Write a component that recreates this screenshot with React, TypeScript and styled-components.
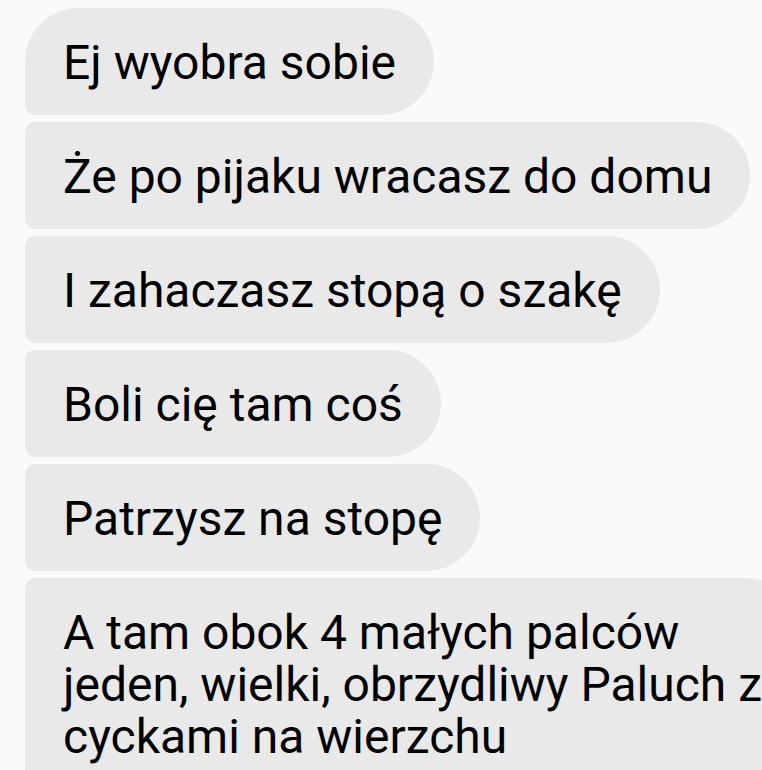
import React from "react";
import styled, { createGlobalStyle } from "styled-components";

const GlobalStyle = createGlobalStyle`
  html, body {
    margin: 0;
    padding: 0;
    background: #fafafa;
    overflow: hidden;
  }
`;

type Corner = "first" | "middle";

const messages: { lines: string[]; pos: Corner }[] = [
  { lines: ["Ej wyobra sobie"], pos: "first" },
  { lines: ["Że po pijaku wracasz do domu"], pos: "middle" },
  { lines: ["I zahaczasz stopą o szakę"], pos: "middle" },
  { lines: ["Boli cię tam coś"], pos: "middle" },
  { lines: ["Patrzysz na stopę"], pos: "middle" },
  {
    lines: [
      "A tam obok 4 małych palców",
      "jeden, wielki, obrzydliwy Paluch z",
      "cyckami na wierzchu",
    ],
    pos: "middle",
  },
];

const App = () => {
  return (
    <Thread>
      <GlobalStyle />
      {messages.map((m, i) => (
        <Bubble key={i} $pos={m.pos}>
          {m.lines.map((line, j) => (
            <Line key={j}>{line}</Line>
          ))}
        </Bubble>
      ))}
    </Thread>
  );
};

export default App;

// the last bubble is wider than the screen, so clip it at the edge
const Thread = styled.div`
  display: flex;
  flex-direction: column;
  align-items: flex-start;
  gap: 7px;
  padding: 8px 0 0 25px;
  width: 100vw;
  height: 770px;
  box-sizing: border-box;
  overflow: hidden;
  background: #fafafa;
`;

const Bubble = styled.div<{ $pos: Corner }>`
  display: flex;
  flex-direction: column;
  flex-shrink: 0;
  padding: 29px 38px 26px 38px;
  background: #e9e9e9;
  color: #000;
  font-family: Roboto, "Noto Sans", sans-serif;
  font-size: 48px;
  line-height: 52px;
  border-radius: ${(p) => (p.$pos === "first" ? "54px" : "10px")} 54px 54px
    10px;
`;

const Line = styled.span`
  white-space: nowrap;
`;
